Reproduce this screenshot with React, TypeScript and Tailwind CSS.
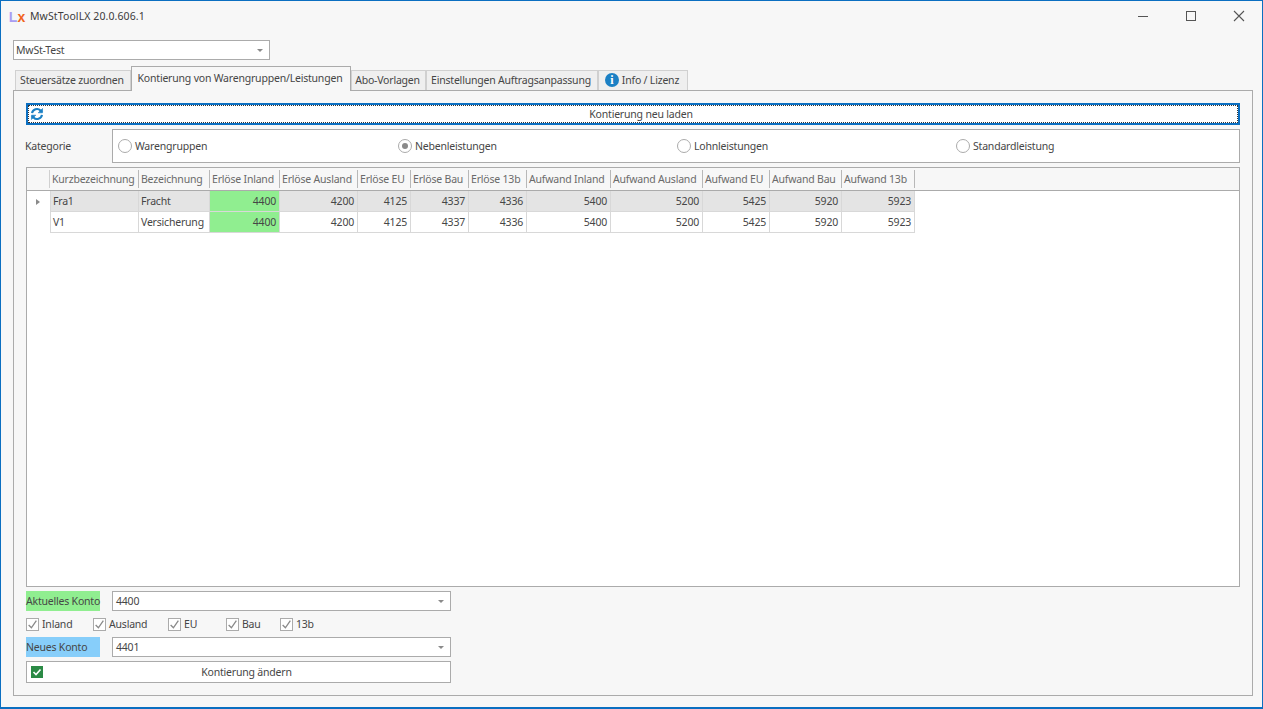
import React from "react";

const headers = ["Kurzbezeichnung","Bezeichnung","Erlöse Inland","Erlöse Ausland","Erlöse EU","Erlöse Bau","Erlöse 13b","Aufwand Inland","Aufwand Ausland","Aufwand EU","Aufwand Bau","Aufwand 13b"];
const rows = [
  ["Fra1","Fracht","4400","4200","4125","4337","4336","5400","5200","5425","5920","5923"],
  ["V1","Versicherung","4400","4200","4125","4337","4336","5400","5200","5425","5920","5923"],
];
const tabs = [
  { t: "Steuersätze zuordnen", w: "w-[116px]" },
  { t: "Kontierung von Warengruppen/Leistungen", w: "w-[220px]", active: true },
  { t: "Abo-Vorlagen", w: "w-[75px]" },
  { t: "Einstellungen Auftragsanpassung", w: "w-[172px]" },
  { t: "Info / Lizenz", w: "w-[90px]", info: true },
];
const cols = "grid grid-cols-[23px_89px_71px_70px_78px_53px_58px_58px_84px_92px_67px_72px_73px] w-[889px]";

function Radio({ label, on, cls }: { label: string; on?: boolean; cls: string }) {
  return (
    <div className={`flex items-center gap-[3px] ${cls}`}>
      <span className="w-[14px] h-[14px] rounded-full border border-[#ababab] bg-white flex items-center justify-center">
        {on && <span className="w-[6px] h-[6px] rounded-full bg-[#8a8a8a]" />}
      </span>
      <span>{label}</span>
    </div>
  );
}

function Check({ label, cls }: { label: string; cls: string }) {
  return (
    <div className={`flex items-center gap-[3px] ${cls}`}>
      <span className="w-[13px] h-[13px] border border-[#ababab] bg-white flex items-center justify-center">
        <svg width="11" height="11" viewBox="0 0 10 10" fill="none"><path d="M1.5 5.5 L4 8 L8.5 1.5" stroke="#8a8a8a" strokeWidth="1.2" /></svg>
      </span>
      <span>{label}</span>
    </div>
  );
}

function Combo({ text, cls }: { text: string; cls: string }) {
  return (
    <div className={`h-[20px] border border-[#ababab] bg-white flex items-center justify-between pr-[6px] ${cls}`}>
      <span>{text}</span>
      <span className="w-0 h-0 border-l-[3.5px] border-r-[3.5px] border-t-[3.5px] border-l-transparent border-r-transparent border-t-[#8a8a8a]" />
    </div>
  );
}

export default function App() {
  return (
    <div className="w-[1263px] h-[709px] overflow-hidden bg-[#f7f7f7] border border-b-2 border-[#0b6fc1] text-[10.5px] tracking-[-0.2px] leading-[14px] text-[#464646] font-['Noto_Sans',sans-serif] flex flex-col">
      <div className="h-[39px] shrink-0 flex items-start">
        <div className="mt-[8px] ml-[8px] w-[16px] h-[16px] flex items-end justify-center font-['Liberation_Sans',sans-serif] tracking-normal text-[14px] leading-[16px] font-bold">
          <span className="text-[#a99df2]">L</span><span className="text-[#f0641e]">x</span>
        </div>
        <div className="ml-[5px] mt-[8px] text-[#3c3c3c] tracking-[0.1px]">MwStToolLX 20.0.606.1</div>
        <div className="ml-auto flex items-center mt-[9px]">
          <svg width="12" height="12" viewBox="0 0 12 12" className="mr-[36px]"><path d="M1 6.5H11" stroke="#555" /></svg>
          <svg width="12" height="12" viewBox="0 0 12 12" className="mr-[36px]"><rect x="1.5" y="1.5" width="9" height="9" fill="none" stroke="#555" /></svg>
          <svg width="12" height="12" viewBox="0 0 12 12" className="mr-[17px]"><path d="M1 1L11 11M11 1L1 11" stroke="#555" strokeWidth="1.1" /></svg>
        </div>
      </div>

      <Combo text="MwSt-Test" cls="ml-[12px] w-[257px] shrink-0 pl-[2px]" />

      <div className="ml-[14px] mt-[5px] h-[25px] shrink-0 flex items-end relative z-10">
        {tabs.map((t) => (
          <div key={t.t} className={`${t.w} flex items-center justify-center whitespace-nowrap pr-[2px] ${t.active ? "h-[25px] mb-[-1px] bg-[#f7f7f7] border border-b-0 border-[#ababab] pb-[2px]" : "h-[20px] bg-[#efefef] border border-[#d0d0d0] border-b-0 pb-[2px]"}`}>
            {t.info && (
              <span className="w-[14px] h-[14px] mr-[3px] rounded-full bg-[#1b80c4] text-white flex items-center justify-center font-['Liberation_Serif',serif] font-bold text-[12px]">i</span>
            )}
            <span>{t.t}</span>
          </div>
        ))}
      </div>

      <div className="ml-[12px] w-[1240px] h-[606px] shrink-0 border border-[#ababab] px-[12px] pt-[12px] flex flex-col">
        <div className="h-[22px] border-2 border-[#0b6fc1] bg-white relative flex items-center justify-center pl-[16px] shrink-0 outline-1 outline-dotted outline-[#333] outline-offset-[-3px]">
          <svg width="14" height="14" viewBox="0 0 24 24" className="absolute left-[2px] top-[2px]" fill="none" stroke="#1b80c4" strokeWidth="3.6">
            <path d="M3.5 10.5A8.5 8.5 0 0 1 18 6L20.5 8.5" />
            <path d="M21.5 2.5V10H14Z" fill="#1b80c4" strokeWidth="1" />
            <path d="M20.5 13.5A8.5 8.5 0 0 1 6 18L3.5 15.5" />
            <path d="M2.5 21.5V14H10Z" fill="#1b80c4" strokeWidth="1" />
          </svg>
          <span>Kontierung neu laden</span>
        </div>

        <div className="mt-[4px] h-[34px] flex items-center shrink-0">
          <div className="w-[86px] ml-[-1px] mr-[1px]">Kategorie</div>
          <div className="w-[1128px] h-[34px] border border-[#ababab] bg-white flex items-center pl-[5px]">
            <Radio label="Warengruppen" cls="w-[280px]" />
            <Radio label="Nebenleistungen" on cls="w-[279px]" />
            <Radio label="Lohnleistungen" cls="w-[279px]" />
            <Radio label="Standardleistung" cls="w-[270px]" />
          </div>
        </div>

        <div className="mt-[4px] h-[420px] border border-[#ababab] bg-white shrink-0">
          <div className="h-[23px] bg-[#f7f7f7] border-b border-[#ababab] flex">
            <div className={cols}>
              <div className="border-r border-[#d0d0d0] my-[2px]" />
              {headers.map((h) => (
                <div key={h} className="text-[#6a6a6a] pl-[2px] flex items-center border-r border-[#b8b8b8] my-[2px] whitespace-nowrap">{h}</div>
              ))}
            </div>
          </div>
          {rows.map((r, i) => (
            <div key={r[0]} className={cols}>
              <div className="h-[21px] flex items-center justify-center bg-white pr-[1px]">
                {i === 0 && <span className="w-0 h-0 border-t-[3.5px] border-b-[3.5px] border-l-[4px] border-t-transparent border-b-transparent border-l-[#8a8a8a]" />}
              </div>
              {r.map((c, j) => (
                <div
                  key={j}
                  className={`h-[21px] flex items-center border-r border-b border-[#d8d8d8] whitespace-nowrap ${j === 0 ? "border-l" : ""} ${j < 2 ? "pl-[2px]" : "justify-end pr-[3px]"} ${j === 2 ? "bg-[#90ee90]" : i === 0 ? "bg-[#e4e4e4]" : "bg-white"}`}
                >
                  {c}
                </div>
              ))}
            </div>
          ))}
        </div>

        <div className="mt-[4px] h-[20px] flex items-center shrink-0">
          <div className="w-[74px] h-[20px] bg-[#90ee90] flex items-center whitespace-nowrap">Aktuelles Konto</div>
          <div className="w-[12px]" />
          <Combo text="4400" cls="w-[339px] pl-[3px]" />
        </div>
        <div className="mt-[6px] h-[14px] flex items-center shrink-0">
          <Check label="Inland" cls="w-[67px]" />
          <Check label="Ausland" cls="w-[75px]" />
          <Check label="EU" cls="w-[58px]" />
          <Check label="Bau" cls="w-[54px]" />
          <Check label="13b" cls="w-[60px]" />
        </div>
        <div className="mt-[6px] h-[20px] flex items-center shrink-0">
          <div className="w-[74px] h-[20px] bg-[#87cefa] flex items-center whitespace-nowrap">Neues Konto</div>
          <div className="w-[12px]" />
          <Combo text="4401" cls="w-[339px] pl-[3px]" />
        </div>
        <div className="mt-[4px] w-[425px] h-[22px] border border-[#ababab] bg-white relative flex items-center justify-center pl-[16px] shrink-0">
          <span className="absolute left-[4px] top-[4px] w-[12px] h-[12px] bg-[#2b8a45] flex items-center justify-center">
            <svg width="10" height="10" viewBox="0 0 10 10" fill="none"><path d="M1.5 5L4 7.5L8.5 2.5" stroke="#fff" strokeWidth="1.6" /></svg>
          </span>
          <span>Kontierung ändern</span>
        </div>
      </div>
    </div>
  );
}
